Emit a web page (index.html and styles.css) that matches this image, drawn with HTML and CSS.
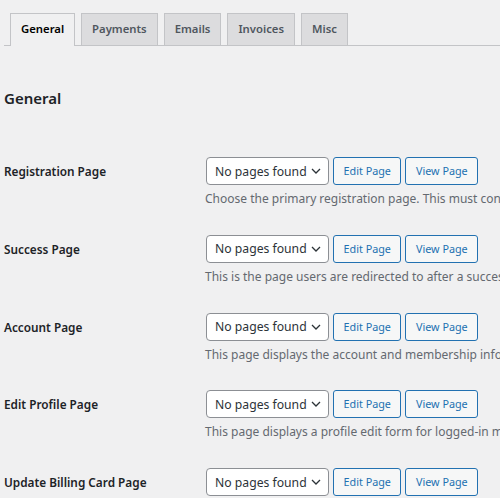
FILE: index.html
```html
<!DOCTYPE html>
<html lang="en">
<head>
    <meta charset="UTF-8">
    <meta name="viewport" content="width=device-width, initial-scale=1.0">
    <title>Settings - General</title>
    <link rel="stylesheet" href="styles.css">
</head>
<body>

    <div class="wrap">
        <!-- Settings tabs -->
        <nav class="tabs">
            <a class="tab tab-active" href="#">General</a>
            <a class="tab" href="#">Payments</a>
            <a class="tab" href="#">Emails</a>
            <a class="tab" href="#">Invoices</a>
            <a class="tab" href="#">Misc</a>
        </nav>

        <h2>General</h2>

        <div class="settings">
            <div class="row">
                <div class="row-label">Registration Page</div>
                <div class="row-field">
                    <div class="controls">
                        <div class="select">
                            <span>No pages found</span>
                            <svg width="10" height="6" viewBox="0 0 10 6"><path d="M1 1l4 4 4-4" fill="none" stroke="#2c3338" stroke-width="1.3"/></svg>
                        </div>
                        <a class="button" href="#">Edit Page</a>
                        <a class="button" href="#">View Page</a>
                    </div>
                    <p class="desc">Choose the primary registration page. This must contain the registration shortcode.</p>
                </div>
            </div>

            <div class="row">
                <div class="row-label">Success Page</div>
                <div class="row-field">
                    <div class="controls">
                        <div class="select">
                            <span>No pages found</span>
                            <svg width="10" height="6" viewBox="0 0 10 6"><path d="M1 1l4 4 4-4" fill="none" stroke="#2c3338" stroke-width="1.3"/></svg>
                        </div>
                        <a class="button" href="#">Edit Page</a>
                        <a class="button" href="#">View Page</a>
                    </div>
                    <p class="desc">This is the page users are redirected to after a successful registration.</p>
                </div>
            </div>

            <div class="row">
                <div class="row-label">Account Page</div>
                <div class="row-field">
                    <div class="controls">
                        <div class="select">
                            <span>No pages found</span>
                            <svg width="10" height="6" viewBox="0 0 10 6"><path d="M1 1l4 4 4-4" fill="none" stroke="#2c3338" stroke-width="1.3"/></svg>
                        </div>
                        <a class="button" href="#">Edit Page</a>
                        <a class="button" href="#">View Page</a>
                    </div>
                    <p class="desc">This page displays the account and membership information for members.</p>
                </div>
            </div>

            <div class="row">
                <div class="row-label">Edit Profile Page</div>
                <div class="row-field">
                    <div class="controls">
                        <div class="select">
                            <span>No pages found</span>
                            <svg width="10" height="6" viewBox="0 0 10 6"><path d="M1 1l4 4 4-4" fill="none" stroke="#2c3338" stroke-width="1.3"/></svg>
                        </div>
                        <a class="button" href="#">Edit Page</a>
                        <a class="button" href="#">View Page</a>
                    </div>
                    <p class="desc">This page displays a profile edit form for logged-in members.</p>
                </div>
            </div>

            <div class="row">
                <div class="row-label">Update Billing Card Page</div>
                <div class="row-field">
                    <div class="controls">
                        <div class="select">
                            <span>No pages found</span>
                            <svg width="10" height="6" viewBox="0 0 10 6"><path d="M1 1l4 4 4-4" fill="none" stroke="#2c3338" stroke-width="1.3"/></svg>
                        </div>
                        <a class="button" href="#">Edit Page</a>
                        <a class="button" href="#">View Page</a>
                    </div>
                    <p class="desc">This page lets members update the card used for their subscription.</p>
                </div>
            </div>
        </div>
    </div>

</body>
</html>
```

FILE: styles.css
```css
body {
    font-family: 'Noto Sans', 'Open Sans', sans-serif;
    background-color: #f0f0f1;
    color: #3c434a;
    margin: 0;
    padding: 0;
    overflow: hidden;
}
.wrap {
    padding-left: 4px;
}

/* Tabs */
.tabs {
    display: flex;
    align-items: flex-end;
    padding-top: 13px;
    border-bottom: 1px solid #c3c4c7;
}
.tab {
    box-sizing: border-box;
    height: 32px;
    line-height: 30px;
    padding: 0 10px;
    margin-left: 6px;
    border: 1px solid #c3c4c7;
    border-bottom: none;
    background-color: #dcdcde;
    color: #50575e;
    font-size: 11.3px;
    font-weight: 600;
    text-decoration: none;
    white-space: nowrap;
}
.tab-active {
    height: 33px;
    margin-bottom: -1px;
    background-color: #f0f0f1;
    color: #000;
}

h2 {
    margin: 42px 0 0;
    font-size: 15px;
    line-height: 20px;
    font-weight: 600;
    color: #1d2327;
}

/* Setting rows */
.settings {
    margin-top: 34px;
}
.row {
    display: flex;
    padding: 15px 0 11.8px;
}
.row-label {
    flex: 0 0 201px;
    height: 28px;
    display: flex;
    align-items: center;
    font-size: 11.8px;
    font-weight: 600;
    color: #1d2327;
    white-space: nowrap;
}
.row-field {
    flex: 1;
    min-width: 0;
}
.controls {
    display: flex;
    gap: 4px;
}
.select {
    box-sizing: border-box;
    width: 123px;
    height: 28px;
    margin-left: 1px;
    padding: 0 7px 0 8px;
    display: flex;
    align-items: center;
    justify-content: space-between;
    background-color: #fff;
    border: 1px solid #8c8f94;
    border-radius: 4px;
    font-size: 12.2px;
    color: #2c3338;
}
.button {
    box-sizing: border-box;
    height: 28px;
    line-height: 26px;
    padding: 0 9.5px;
    background-color: #f6f7f7;
    border: 1px solid #2271b1;
    border-radius: 3px;
    color: #2271b1;
    font-size: 10.8px;
    text-decoration: none;
    white-space: nowrap;
}
.desc {
    margin: 5px 0 0;
    line-height: 18px;
    font-size: 12px;
    color: #646970;
    white-space: nowrap;
}
```
